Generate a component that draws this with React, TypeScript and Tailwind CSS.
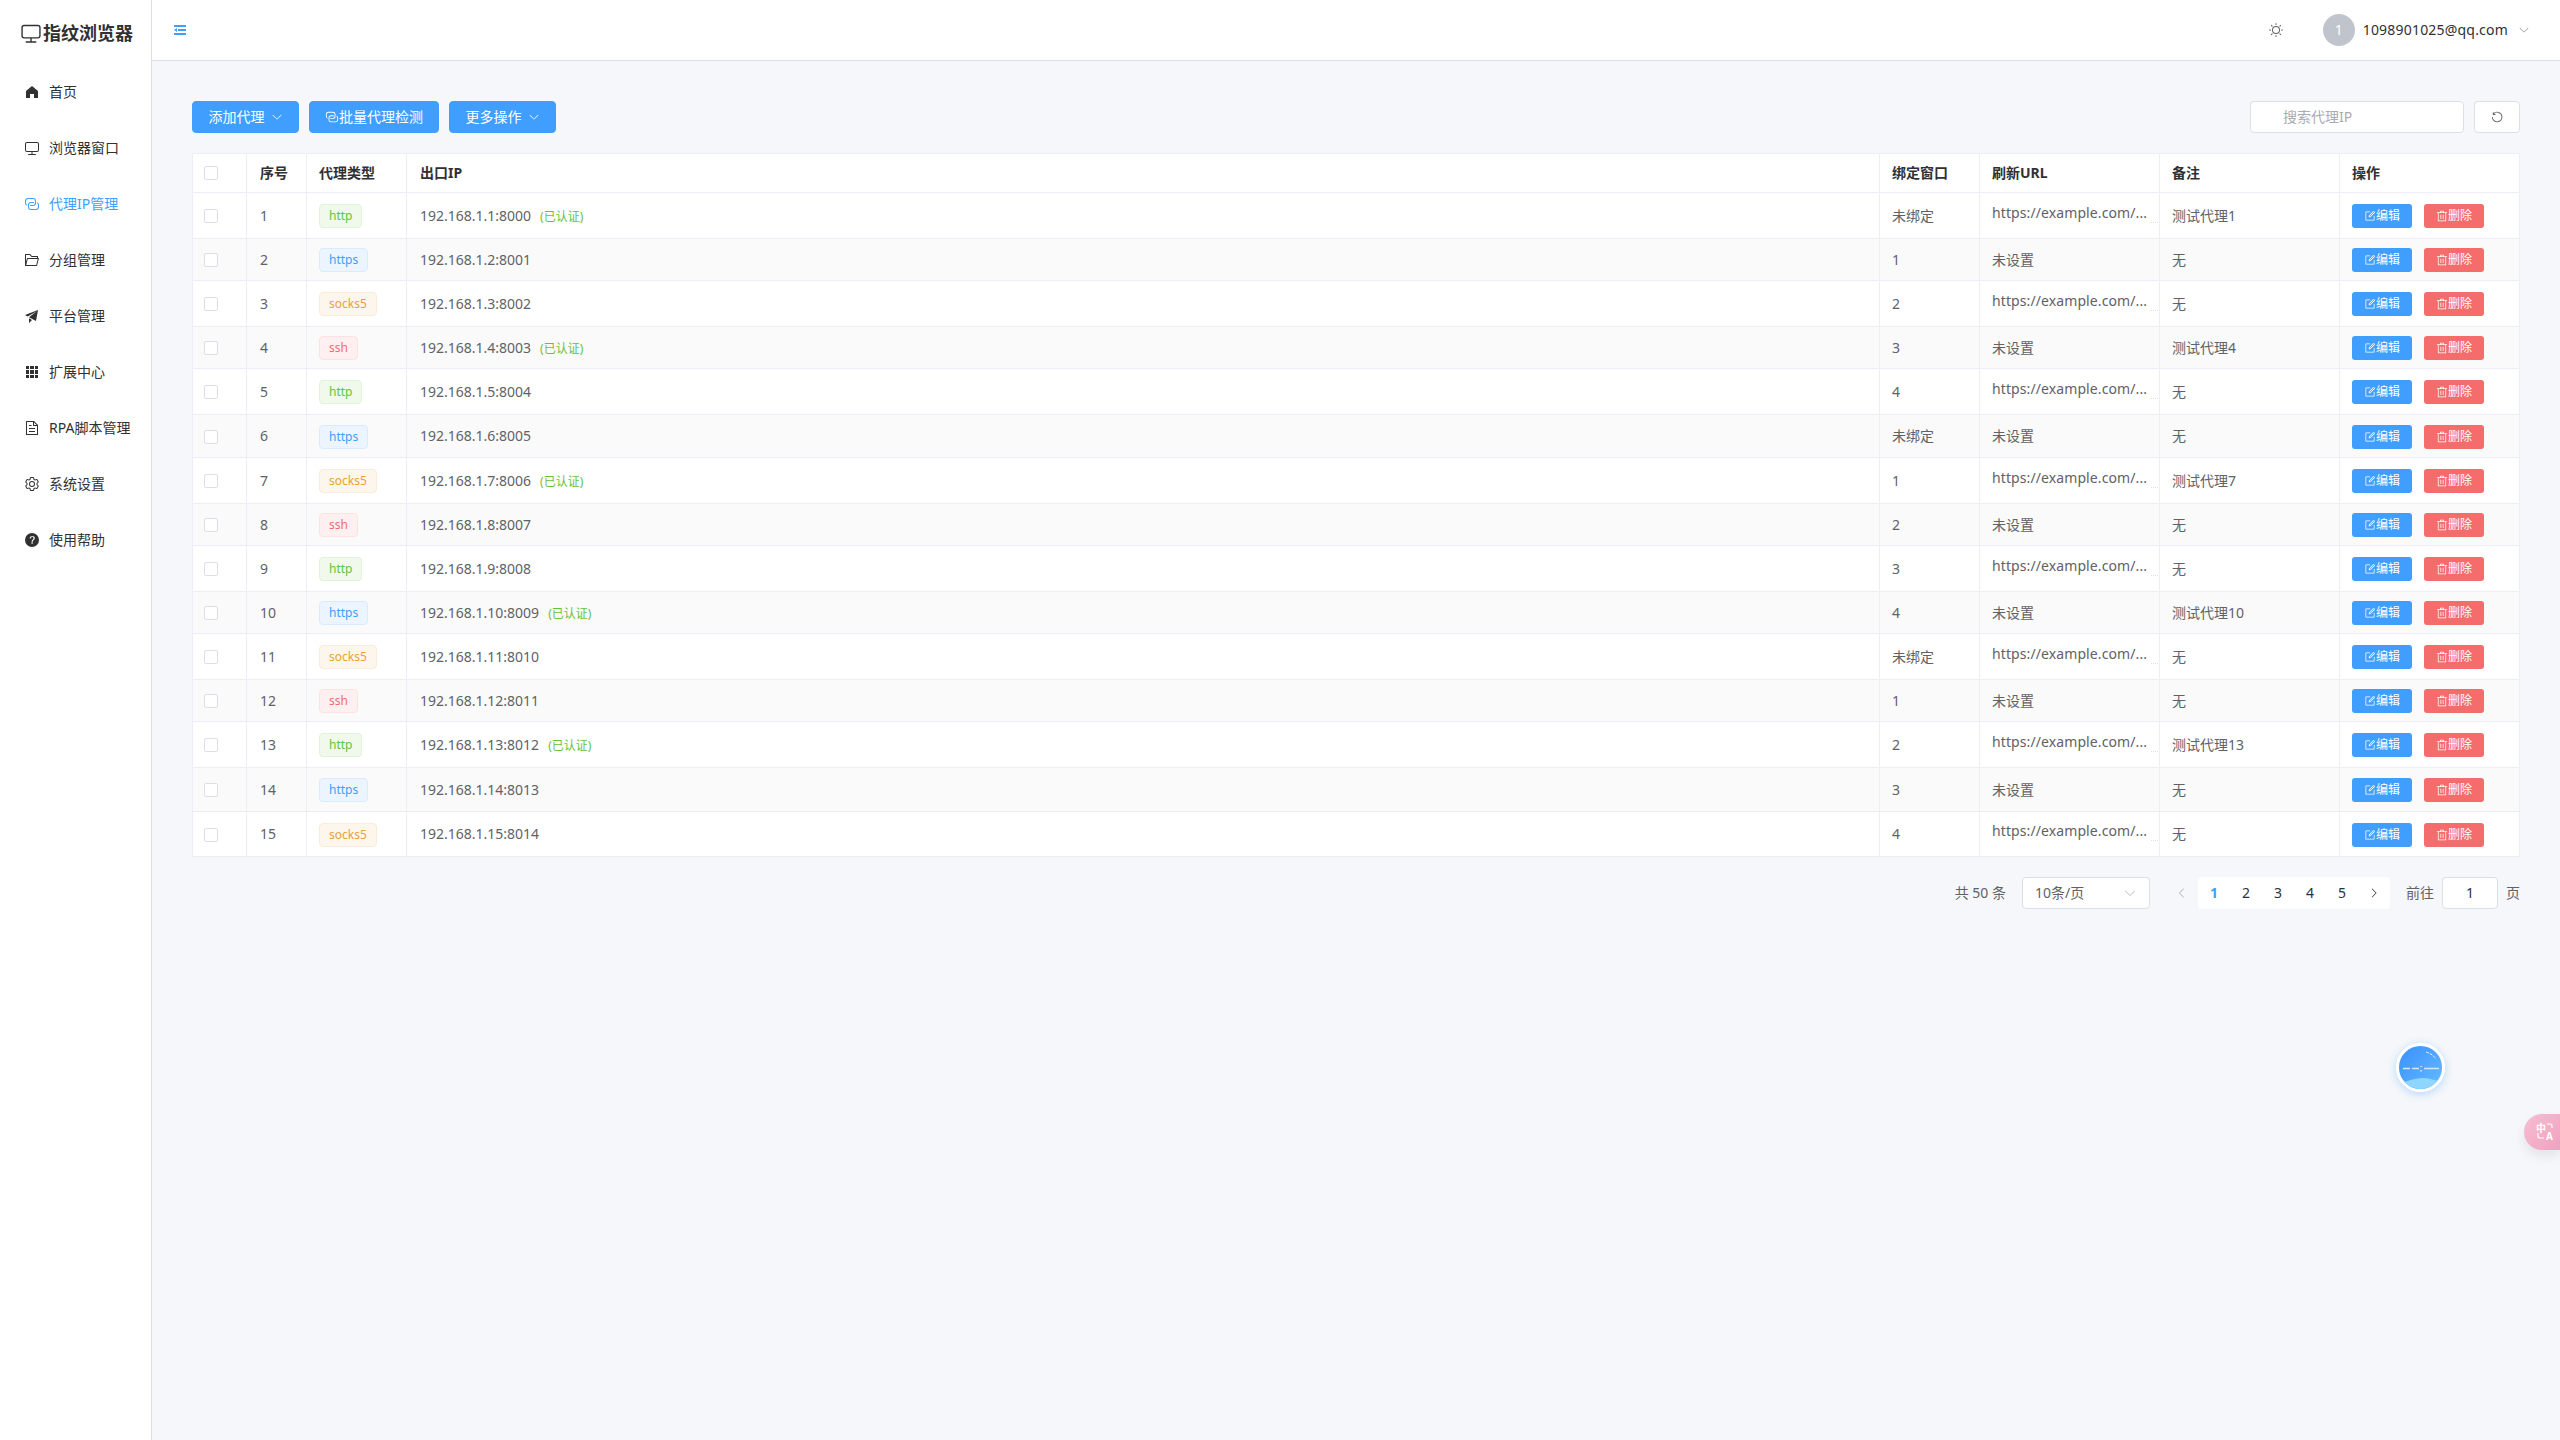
import type { ReactNode } from 'react';

const paths = {
  home: 'M512 128 128 447.936V896h255.936V640H640v256h255.936V447.936z',
  monitor:
    'M544 768v128h192a32 32 0 1 1 0 64H288a32 32 0 1 1 0-64h192V768H192A128 128 0 0 1 64 640V256a128 128 0 0 1 128-128h640a128 128 0 0 1 128 128v384a128 128 0 0 1-128 128H544zM192 192a64 64 0 0 0-64 64v384a64 64 0 0 0 64 64h640a64 64 0 0 0 64-64V256a64 64 0 0 0-64-64H192z',
  connection:
    'M640 384v64H448a128 128 0 0 0-128 128v128a128 128 0 0 0 128 128h320a128 128 0 0 0 128-128V576a128 128 0 0 0-64-110.848V394.88c74.56 26.368 128 97.472 128 181.056v128a192 192 0 0 1-192 192H448a192 192 0 0 1-192-192V576a192 192 0 0 1 192-192h192zM384 640v-64h192a128 128 0 0 0 128-128V320a128 128 0 0 0-128-128H256a128 128 0 0 0-128 128v128a128 128 0 0 0 64 110.848v70.272A192.064 192.064 0 0 1 64 448V320a192 192 0 0 1 192-192h320a192 192 0 0 1 192 192v128a192 192 0 0 1-192 192H384z',
  folder:
    'M878.08 448H241.92l-96 384h636.16l96-384zM832 384v-64H485.76L357.504 192H128v448l57.92-231.744A32 32 0 0 1 216.96 384H832zm-24.96 512H96a32 32 0 0 1-32-32V160a32 32 0 0 1 32-32h287.872l128.384 128H864a32 32 0 0 1 32 32v96h23.04a32 32 0 0 1 31.04 39.744l-112 448A32 32 0 0 1 807.04 896z',
  promotion: 'm64 448 832-320-128 704-446.08-243.328L832 192 242.816 545.472 64 448zm256 512V657.024L512 768 320 960z',
  grid: 'M640 384v256H384V384h256zm64 0h192v256H704V384zm-64 512H384V704h256v192zm64 0V704h192v192H704zm-64-768v192H384V128h256zm64 0h192v192H704V128zM320 384v256H128V384h192zm0 512H128V704h192v192zm0-768v192H128V128h192z',
  document:
    'M832 384H576V128H192v768h640V384zm-26.496-64L640 154.496V320h165.504zM160 64h480l256 256v608a32 32 0 0 1-32 32H160a32 32 0 0 1-32-32V96a32 32 0 0 1 32-32zm160 448h384v64H320v-64zm0-192h160v64H320v-64zm0 384h384v64H320v-64z',
  setting:
    'M600.704 64a32 32 0 0 1 30.464 22.208l35.2 109.376c14.784 7.232 28.928 15.36 42.432 24.512l112.384-24.192a32 32 0 0 1 34.432 15.36L944.32 364.8a32 32 0 0 1-4.032 37.504l-77.12 85.12a357.12 357.12 0 0 1 0 49.024l77.12 85.248a32 32 0 0 1 4.032 37.504l-88.704 153.6a32 32 0 0 1-34.432 15.296L708.8 803.904c-13.44 9.088-27.648 17.28-42.368 24.512l-35.264 109.376A32 32 0 0 1 600.704 960H423.296a32 32 0 0 1-30.464-22.208L357.696 828.48a351.616 351.616 0 0 1-42.56-24.64l-112.32 24.256a32 32 0 0 1-34.432-15.36L79.68 659.2a32 32 0 0 1 4.032-37.504l77.12-85.248a357.12 357.12 0 0 1 0-48.896l-77.12-85.248A32 32 0 0 1 79.68 364.8l88.704-153.6a32 32 0 0 1 34.432-15.296l112.32 24.256c13.568-9.152 27.776-17.408 42.56-24.64l35.2-109.312A32 32 0 0 1 423.232 64H600.64zm-23.424 64H446.72l-36.352 113.088-24.512 11.968a294.113 294.113 0 0 0-34.816 20.096l-22.656 15.36-116.224-25.088-65.28 113.152 79.68 88.192-1.92 27.136a293.12 293.12 0 0 0 0 40.192l1.92 27.136-79.808 88.192 65.344 113.152 116.224-25.024 22.656 15.296a294.113 294.113 0 0 0 34.816 20.096l24.512 11.968L446.72 896h130.688l36.48-113.152 24.448-11.904a288.282 288.282 0 0 0 34.752-20.096l22.592-15.296 116.288 25.024 65.28-113.152-79.744-88.192 1.92-27.136a293.12 293.12 0 0 0 0-40.256l-1.92-27.136 79.808-88.128-65.344-113.152-116.288 24.96-22.592-15.232a287.616 287.616 0 0 0-34.752-20.096l-24.448-11.904L577.344 128zM512 320a192 192 0 1 1 0 384 192 192 0 0 1 0-384zm0 64a128 128 0 1 0 0 256 128 128 0 0 0 0-256z',
  help: 'M512 64a448 448 0 1 1 0 896 448 448 0 0 1 0-896zm23.744 191.488c-52.096 0-92.928 14.784-123.2 44.352-30.976 29.568-45.76 70.4-45.76 122.496h80.256c0-29.568 5.632-52.8 17.6-68.992 13.696-19.712 36.224-29.12 68.288-29.12 25.088 0 44.8 6.72 59.136 20.48 13.568 13.696 20.48 32.128 20.48 55.488 0 17.472-6.272 34.176-18.816 49.28l-8.96 10.048c-44.8 39.872-71.936 69.12-81.344 88.128-8.512 16.768-12.8 37.12-12.8 60.544v11.968h81.088v-11.968c0-16.768 3.392-31.552 10.752-45.12 5.888-12.096 14.784-23.488 26.24-34.176 31.104-26.88 49.28-44.352 55.488-51.072 17.472-23.488 26.24-52.8 26.24-87.936 0-43.52-14.784-77.824-44.352-103.104-30.976-25.856-70.848-38.656-120-38.656zm-15.232 397.056a55.552 55.552 0 0 0-38.656 15.232 49.28 49.28 0 0 0-15.232 36.288c0 14.784 5.632 27.392 15.232 37.376 10.752 10.048 24.256 15.232 38.656 15.232s28.16-5.184 38.656-15.232a50.56 50.56 0 0 0 15.296-37.376c0-14.784-5.632-27.008-15.296-36.288a55.552 55.552 0 0 0-38.656-15.232z',
  edit: 'M832 512a32 32 0 1 1 64 0v352a32 32 0 0 1-32 32H160a32 32 0 0 1-32-32V160a32 32 0 0 1 32-32h352a32 32 0 0 1 0 64H192v640h640V512zM469.952 554.24l52.8-7.552L847.104 222.4a32 32 0 1 0-45.248-45.248L477.44 501.44l-7.552 52.8zm422.4-422.4a96 96 0 0 1 0 135.808l-331.84 331.84a32 32 0 0 1-18.112 9.088L436.8 623.68a32 32 0 0 1-36.224-36.224l15.104-105.6a32 32 0 0 1 9.024-18.112l331.904-331.84a96 96 0 0 1 135.744 0z',
  trash:
    'M160 256H96a32 32 0 0 1 0-64h256V95.936a32 32 0 0 1 32-32h256a32 32 0 0 1 32 32V192h256a32 32 0 1 1 0 64h-64v672a32 32 0 0 1-32 32H192a32 32 0 0 1-32-32V256zm448-64v-64H416v64h192zM224 896h576V256H224v640zm192-128a32 32 0 0 1-32-32V416a32 32 0 0 1 64 0v320a32 32 0 0 1-32 32zm192 0a32 32 0 0 1-32-32V416a32 32 0 0 1 64 0v320a32 32 0 0 1-32 32z',
  arrowDown:
    'M831.872 340.864 512 652.672 192.128 340.864a30.592 30.592 0 0 0-42.752 0 29.12 29.12 0 0 0 0 41.6L489.664 714.24a32 32 0 0 0 44.672 0l340.288-331.712a29.12 29.12 0 0 0 0-41.728 30.592 30.592 0 0 0-42.752 0z',
  arrowLeft:
    'M609.408 149.376 277.76 489.6a32 32 0 0 0 0 44.672l331.648 340.352a29.12 29.12 0 0 0 41.728 0 30.592 30.592 0 0 0 0-42.752L339.264 511.936l311.872-319.872a30.592 30.592 0 0 0 0-42.688 29.12 29.12 0 0 0-41.728 0z',
  arrowRight:
    'M340.864 149.312a30.592 30.592 0 0 0 0 42.752L652.736 512 340.864 831.872a30.592 30.592 0 0 0 0 42.752 29.12 29.12 0 0 0 41.728 0L714.24 534.336a32 32 0 0 0 0-44.672L382.592 149.376a29.12 29.12 0 0 0-41.728 0z',
  refresh:
    'M289.088 296.704h92.992a32 32 0 0 1 0 64H232.96a32 32 0 0 1-32-32V179.712a32 32 0 0 1 64 0v50.56a384 384 0 0 1 643.84 282.88 384 384 0 0 1-383.936 384 384 384 0 0 1-384-384h64a320 320 0 1 0 640 0 320 320 0 0 0-555.712-216.448z',
  fold: 'M896 192H128v128h768V192zm0 256H384v128h512V448zm0 256H128v128h768V704zM320 384 128 512l192 128V384z',
  sunny:
    'M512 704a192 192 0 1 0 0-384 192 192 0 0 0 0 384zm0 64a256 256 0 1 1 0-512 256 256 0 0 1 0 512zm0-704a32 32 0 0 1 32 32v64a32 32 0 0 1-64 0V96a32 32 0 0 1 32-32zm0 768a32 32 0 0 1 32 32v64a32 32 0 1 1-64 0v-64a32 32 0 0 1 32-32zM195.2 195.2a32 32 0 0 1 45.248 0l45.248 45.248a32 32 0 1 1-45.248 45.248L195.2 240.448a32 32 0 0 1 0-45.248zm543.104 543.104a32 32 0 0 1 45.248 0l45.248 45.248a32 32 0 0 1-45.248 45.248l-45.248-45.248a32 32 0 0 1 0-45.248zM64 512a32 32 0 0 1 32-32h64a32 32 0 0 1 0 64H96a32 32 0 0 1-32-32zm768 0a32 32 0 0 1 32-32h64a32 32 0 1 1 0 64h-64a32 32 0 0 1-32-32zM195.2 828.8a32 32 0 0 1 0-45.248l45.248-45.248a32 32 0 0 1 45.248 45.248L240.448 828.8a32 32 0 0 1-45.248 0zm543.104-543.104a32 32 0 0 1 0-45.248l45.248-45.248a32 32 0 0 1 45.248 45.248l-45.248 45.248a32 32 0 0 1-45.248 0z',
};

type IconName = keyof typeof paths;

function Icon({ name, className }: { name: IconName; className: string }) {
  return (
    <svg viewBox="0 0 1024 1024" fill="currentColor" className={`shrink-0 ${className}`}>
      <path d={paths[name]} />
    </svg>
  );
}

const menuItems: { icon: IconName; label: string; active?: boolean }[] = [
  { icon: 'home', label: '首页' },
  { icon: 'monitor', label: '浏览器窗口' },
  { icon: 'connection', label: '代理IP管理', active: true },
  { icon: 'folder', label: '分组管理' },
  { icon: 'promotion', label: '平台管理' },
  { icon: 'grid', label: '扩展中心' },
  { icon: 'document', label: 'RPA脚本管理' },
  { icon: 'setting', label: '系统设置' },
  { icon: 'help', label: '使用帮助' },
];

const tagStyles = {
  http: 'bg-[#f0f9eb] border-[#e1f3d8] text-[#67c23a]',
  https: 'bg-[#ecf5ff] border-[#d9ecff] text-[#409eff]',
  socks5: 'bg-[#fdf6ec] border-[#faecd8] text-[#e6a23c]',
  ssh: 'bg-[#fef0f0] border-[#fde2e2] text-[#f56c6c]',
};

const proxyTypes = ['http', 'https', 'socks5', 'ssh'] as const;
const binds = ['未绑定', '1', '2', '3', '4'];
// row heights differ a little in the original table
const rowHeights = ['h-[46px]', 'h-[42px]', 'h-[46px]', 'h-[42px]', 'h-[46px]', 'h-[43px]', 'h-[46px]', 'h-[42px]', 'h-[46px]', 'h-[42px]', 'h-[46px]', 'h-[42px]', 'h-[46px]', 'h-[44px]', 'h-[45px]'];

const rows = rowHeights.map((height, i) => ({
  id: i + 1,
  height,
  type: proxyTypes[i % 4],
  ip: `192.168.1.${i + 1}:${8000 + i}`,
  auth: i % 3 === 0,
  bind: binds[i % 5],
  url: i % 2 === 0 ? 'https://example.com/...' : '',
  note: i % 3 === 0 ? `测试代理${i + 1}` : '无',
}));

function Checkbox() {
  return <span className="block w-[14px] h-[14px] rounded-[2px] border border-[#dcdfe6] bg-white" />;
}

function ToolButton({ children, className }: { children: ReactNode; className: string }) {
  return (
    <button className={`h-8 flex items-center justify-center rounded bg-[#409eff] border border-[#409eff] text-white text-sm ${className}`}>
      {children}
    </button>
  );
}

function Th({ children, className = 'px-3' }: { children?: ReactNode; className?: string }) {
  return (
    <th className={`text-left text-sm font-bold text-[#303133] border-t border-b border-r border-[#ebeef5] bg-white ${className}`}>
      {children}
    </th>
  );
}

function Td({ children, className = 'px-3' }: { children?: ReactNode; className?: string }) {
  return <td className={`p-0 text-sm text-[#606266] border-b border-r border-[#ebeef5] ${className}`}>{children}</td>;
}

function Sidebar() {
  return (
    <aside className="w-[152px] shrink-0 bg-white border-r border-[#dcdfe6]">
      <div className="h-[61px] pl-5 flex items-center gap-[1px] text-[#303133] pt-[5px]">
        <Icon name="monitor" className="w-[22px] h-[22px]" />
        <span className="text-lg font-bold whitespace-nowrap">指纹浏览器</span>
      </div>
      <nav className="mt-[3px]">
        {menuItems.map(item => (
          <div
            key={item.label}
            className={`h-14 pl-6 flex items-center gap-[9px] text-sm whitespace-nowrap ${item.active ? 'text-[#409eff]' : 'text-[#303133]'}`}
          >
            <Icon name={item.icon} className="w-4 h-4" />
            {item.label}
          </div>
        ))}
      </nav>
    </aside>
  );
}

function Header() {
  return (
    <header className="h-[61px] bg-white border-b border-[#dcdfe6] pl-5 pr-[30px] flex items-center justify-between">
      <Icon name="fold" className="w-4 h-4 text-[#409eff]" />
      <div className="flex items-center">
        <Icon name="sunny" className="w-4 h-4 text-[#606266] mr-[39px]" />
        <span className="w-8 h-8 rounded-full bg-[#c0c4cc] text-white text-sm flex items-center justify-center">1</span>
        <span className="ml-2 text-sm tracking-[0.2px] text-[#303133]">1098901025@qq.com</span>
        <Icon name="arrowDown" className="w-3 h-3 ml-[10px] text-[#909399]" />
      </div>
    </header>
  );
}

function Toolbar() {
  return (
    <div className="flex items-center justify-between mb-5">
      <div className="flex gap-[10px]">
        <ToolButton className="w-[107px]">
          添加代理
          <Icon name="arrowDown" className="w-3 h-3 ml-[6px]" />
        </ToolButton>
        <ToolButton className="w-[130px]">
          <Icon name="connection" className="w-[14px] h-[14px]" />
          批量代理检测
        </ToolButton>
        <ToolButton className="w-[107px]">
          更多操作
          <Icon name="arrowDown" className="w-3 h-3 ml-[6px]" />
        </ToolButton>
      </div>
      <div className="flex gap-[10px]">
        <div className="w-[214px] h-8 pl-8 flex items-center bg-white border border-[#dcdfe6] rounded text-sm text-[#a8abb2]">搜索代理IP</div>
        <button className="w-[46px] h-8 flex items-center justify-center bg-white border border-[#dcdfe6] rounded text-[#606266]">
          <Icon name="refresh" className="w-[14px] h-[14px]" />
        </button>
      </div>
    </div>
  );
}

function ProxyTable() {
  return (
    <table className="w-[2328px] table-fixed border-separate border-spacing-0 bg-white">
      <colgroup>
        <col className="w-[55px]" />
        <col className="w-[60px]" />
        <col className="w-[100px]" />
        <col />
        <col className="w-[100px]" />
        <col className="w-[180px]" />
        <col className="w-[180px]" />
        <col className="w-[180px]" />
      </colgroup>
      <thead>
        <tr className="h-10">
          <Th className="border-l pl-[11px]">
            <Checkbox />
          </Th>
          <Th className="pl-[13px]">序号</Th>
          <Th>代理类型</Th>
          <Th className="pl-[13px]">出口IP</Th>
          <Th>绑定窗口</Th>
          <Th>刷新URL</Th>
          <Th>备注</Th>
          <Th>操作</Th>
        </tr>
      </thead>
      <tbody>
        {rows.map(row => (
          <tr key={row.id} className={`${row.height} ${row.id % 2 === 0 ? 'bg-[#fafafa]' : 'bg-white'}`}>
            <Td className="border-l pl-[11px] pt-px">
              <Checkbox />
            </Td>
            <Td className="pl-[13px]">{row.id}</Td>
            <Td className="px-3 pt-px">
              <span className={`inline-flex items-center h-6 px-[9px] rounded border text-xs align-middle ${tagStyles[row.type]}`}>{row.type}</span>
            </Td>
            <Td className="pl-[13px]">
              {row.ip}
              {row.auth && <span className="ml-[9px] text-xs text-[#67c23a]">(已认证)</span>}
            </Td>
            <Td>{row.bind}</Td>
            <Td className="px-3 relative">
              {row.url ? (
                <>
                  <a className="block whitespace-nowrap tracking-[0.1px] pb-[6px] text-[#606266]">{row.url}</a>
                  <span className="absolute right-[1px] bottom-[15px] w-[7px] border-b border-dotted border-[#dcdfe6]" />
                </>
              ) : (
                '未设置'
              )}
            </Td>
            <Td>{row.note}</Td>
            <Td className="px-3 pt-px">
              <div className="flex gap-3">
                <button className="w-[60px] h-6 flex items-center justify-center rounded-[3px] bg-[#409eff] text-white text-xs">
                  <Icon name="edit" className="w-3 h-3" />
                  编辑
                </button>
                <button className="w-[60px] h-6 flex items-center justify-center rounded-[3px] bg-[#f56c6c] text-white text-xs">
                  <Icon name="trash" className="w-3 h-3" />
                  删除
                </button>
              </div>
            </Td>
          </tr>
        ))}
      </tbody>
    </table>
  );
}

function Pagination() {
  return (
    <div className="mt-5 flex items-center justify-end h-8 text-sm text-[#606266]">
      <span className="mr-4">共 50 条</span>
      <div className="w-[128px] h-8 pl-3 pr-3 mr-4 flex items-center justify-between bg-white border border-[#dcdfe6] rounded">
        10条/页
        <Icon name="arrowDown" className="w-[14px] h-[14px] text-[#c0c4cc]" />
      </div>
      <span className="w-8 h-8 flex items-center justify-center text-[#a8abb2]">
        <Icon name="arrowLeft" className="w-3 h-3" />
      </span>
      <div className="flex bg-white rounded-sm text-[#303133]">
        {[1, 2, 3, 4, 5].map(n => (
          <span key={n} className={`w-8 h-8 flex items-center justify-center ${n === 1 ? 'text-[#409eff] font-bold' : ''}`}>
            {n}
          </span>
        ))}
        <span className="w-8 h-8 flex items-center justify-center">
          <Icon name="arrowRight" className="w-3 h-3" />
        </span>
      </div>
      <span className="ml-4">前往</span>
      <div className="w-14 h-8 mx-2 flex items-center justify-center bg-white border border-[#dcdfe6] rounded text-[#303133]">1</div>
      <span>页</span>
    </div>
  );
}

function FloatingBall() {
  return (
    <div className="absolute left-[2396px] top-[1043px] w-[49px] h-[49px] rounded-full border-[3px] border-white overflow-hidden bg-gradient-to-br from-[#3a8eff] to-[#66bcff] shadow-[0_2px_8px_rgba(64,158,255,0.35)]">
      <svg viewBox="0 0 43 43" className="w-full h-full">
        <path d="M0 43 V36 C10 36 14 32 24 32 C32 32 37 35 43 36 V43 Z" fill="#8fd6ff" />
        <path d="M4 22.5 H11 M13 22.5 H20 M25 22.5 H40" stroke="#cfe8ff" strokeWidth="1.6" />
        <path d="M22 20 V21 M22 24 V25.5" stroke="#ffffff" strokeWidth="1.2" />
        <path d="M27 6 C31 7 34 9 37 13" stroke="#dceeff" strokeWidth="1" fill="none" strokeDasharray="3 1" />
      </svg>
    </div>
  );
}

function TranslateTab() {
  return (
    <div className="absolute right-0 top-[1114px] w-9 h-9 rounded-l-[18px] bg-gradient-to-br from-[#f6bdd2] to-[#f0a2bf] shadow-[0_6px_12px_rgba(0,0,0,0.08)] text-white">
      <div className="relative w-full h-full">
        <span className="absolute left-[12px] top-[8px] text-[10px] leading-[12px] font-bold">中</span>
        <span className="absolute left-[22px] top-[16px] text-[10px] leading-[12px] font-bold">A</span>
        <svg viewBox="0 0 36 36" className="absolute inset-0" fill="none" stroke="white" strokeWidth="1.2">
          <path d="M23 10 H26 Q28 10 28 12 V14" />
          <path d="M14 19 V22 Q14 24 16 24 H20" />
        </svg>
      </div>
    </div>
  );
}

export default function App() {
  return (
    <div className="relative flex min-h-screen h-[1440px] overflow-hidden bg-[#f5f7fa] font-['Noto_Sans','Noto_Sans_CJK_SC',sans-serif]">
      <Sidebar />
      <div className="flex-1 min-w-0">
        <Header />
        <main className="pt-10 pl-10 pr-10">
          <Toolbar />
          <ProxyTable />
          <Pagination />
        </main>
      </div>
      <FloatingBall />
      <TranslateTab />
    </div>
  );
}
